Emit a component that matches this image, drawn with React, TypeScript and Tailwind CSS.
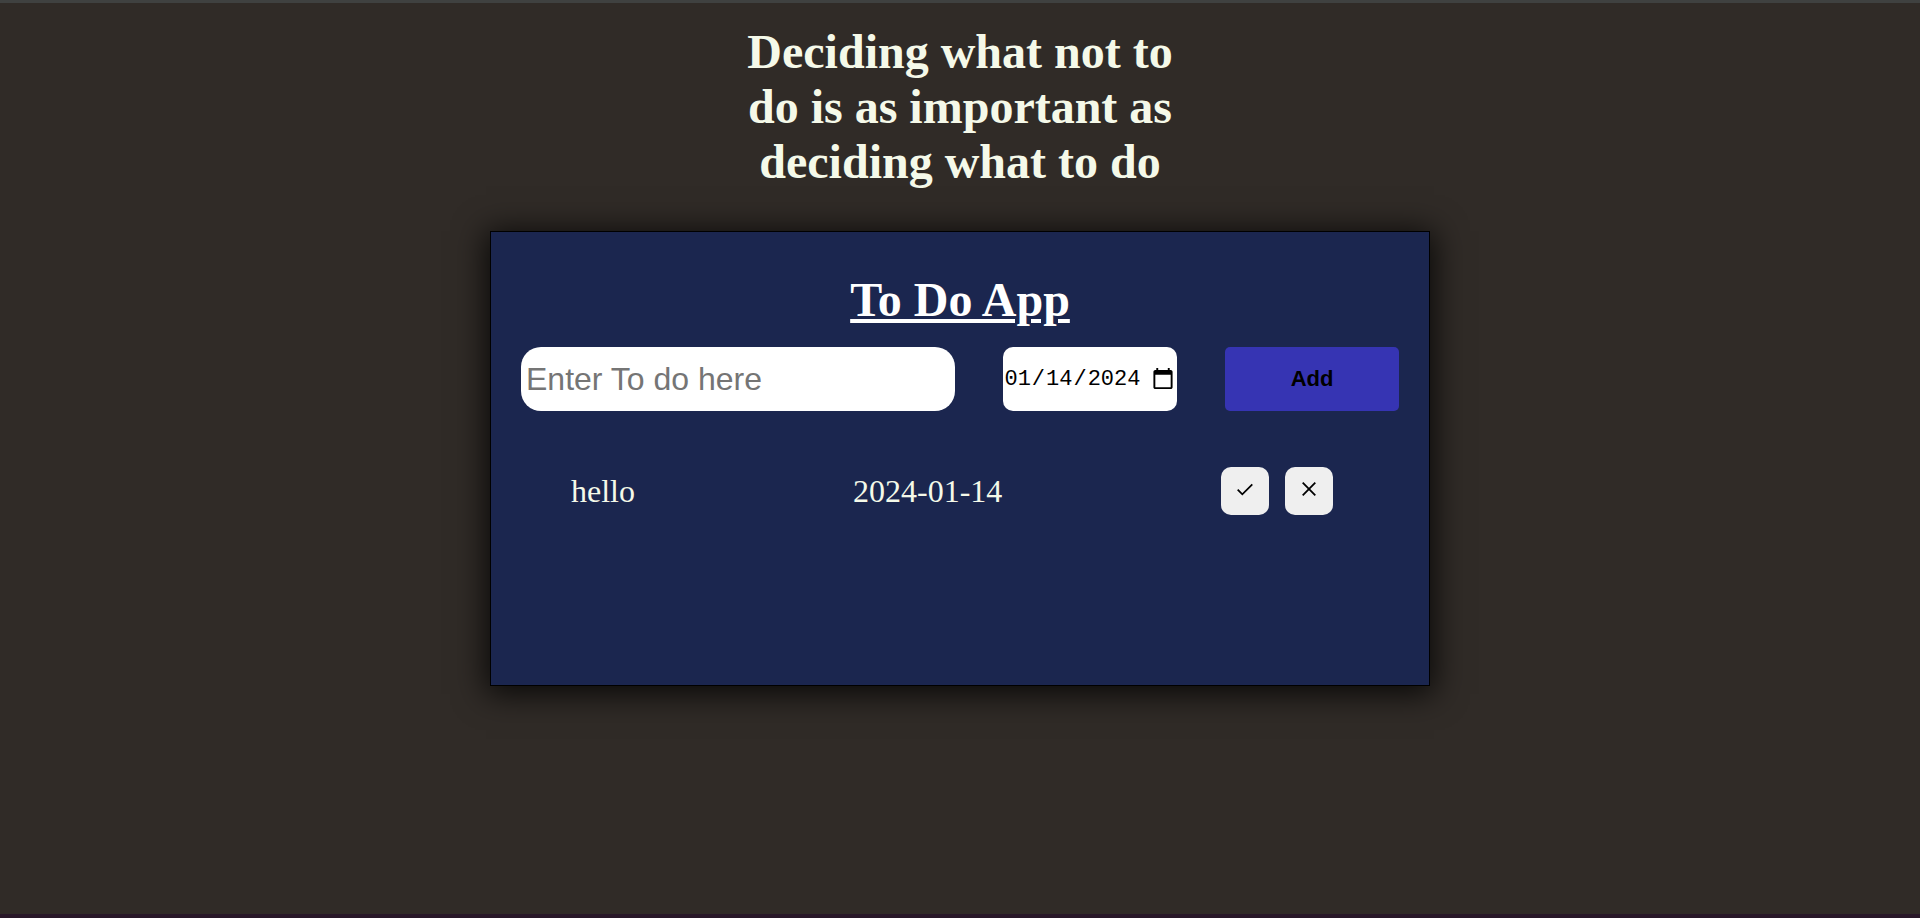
import { useState } from "react";
import type { FormEvent } from "react";

type Todo = { id: number; text: string; date: string };

function CheckIcon() {
  return (
    <svg viewBox="0 0 24 24" className="size-6" fill="none" stroke="currentColor" strokeWidth="1.8" aria-hidden="true">
      <path d="M4.7 12.7 L9.3 17.3 L19.3 7.3" />
    </svg>
  );
}

function CrossIcon() {
  return (
    <svg viewBox="0 0 24 24" className="size-6" fill="none" stroke="currentColor" strokeWidth="1.8" aria-hidden="true">
      <path d="M5.7 5.7 L18.3 18.3 M18.3 5.7 L5.7 18.3" />
    </svg>
  );
}

const iconButton =
  "flex size-12 items-start justify-center rounded-[10px] bg-[#efefef] pt-[10px] text-black";

export default function App() {
  const [todos, setTodos] = useState<Todo[]>([{ id: 1, text: "hello", date: "2024-01-14" }]);
  const [text, setText] = useState("");
  const [date, setDate] = useState("2024-01-14");

  const add = (event: FormEvent) => {
    event.preventDefault();
    if (!text.trim()) return;
    setTodos([...todos, { id: Date.now(), text, date }]);
    setText("");
  };
  const remove = (id: number) => setTodos(todos.filter((todo) => todo.id !== id));

  return (
    <div className="flex min-h-screen flex-col border-t-3 border-b-4 border-t-[#3f4140] border-b-[#281728] bg-[#302b27] font-['Liberation_Serif',serif] text-[#f5f9e9]">
      <h1 className="mx-auto mt-[21px] max-w-[470px] text-center text-5xl leading-[55px] font-bold">
        Deciding what not to do is as important as deciding what to do
      </h1>

      <main className="mx-auto mt-[42px] min-h-[455px] w-full max-w-[940px] border border-black bg-[#1b264f] px-[30px] pt-10 shadow-[0_4px_30px_4px_rgba(0,0,0,0.8)]">
        <h2 className="text-center text-5xl leading-[55px] font-bold text-white underline">To Do App</h2>

        <form onSubmit={add} className="mt-5 grid h-16 grid-cols-[2.5fr_1fr_1fr] gap-12">
          <input
            type="text"
            aria-label="To do"
            placeholder="Enter To do here"
            value={text}
            onChange={(event) => setText(event.target.value)}
            className="min-w-0 rounded-[20px] bg-white px-[5px] font-['Liberation_Sans',sans-serif] text-[32px] text-black placeholder:text-[#757575]"
          />
          <input
            type="date"
            aria-label="Due date"
            value={date}
            onChange={(event) => setDate(event.target.value)}
            className="min-w-0 rounded-[10px] bg-white font-['Liberation_Mono',monospace] text-[22px] text-black [&::-webkit-calendar-picker-indicator]:size-6"
          />
          <button
            type="submit"
            className="rounded-[5px] bg-[#3634b3] font-['Liberation_Sans',sans-serif] text-[22px] leading-6 font-bold text-black"
          >
            Add
          </button>
        </form>

        <ul className="mt-14 flex flex-col gap-4 pl-[50px]">
          {todos.map((todo) => (
            <li key={todo.id} className="grid grid-cols-[282fr_368fr_178fr] items-center text-[32px] leading-9">
              <span>{todo.text}</span>
              <span>{todo.date}</span>
              <span className="flex gap-4">
                <button type="button" aria-label="Mark as done" onClick={() => remove(todo.id)} className={iconButton}>
                  <CheckIcon />
                </button>
                <button type="button" aria-label="Delete" onClick={() => remove(todo.id)} className={iconButton}>
                  <CrossIcon />
                </button>
              </span>
            </li>
          ))}
        </ul>
      </main>
    </div>
  );
}
